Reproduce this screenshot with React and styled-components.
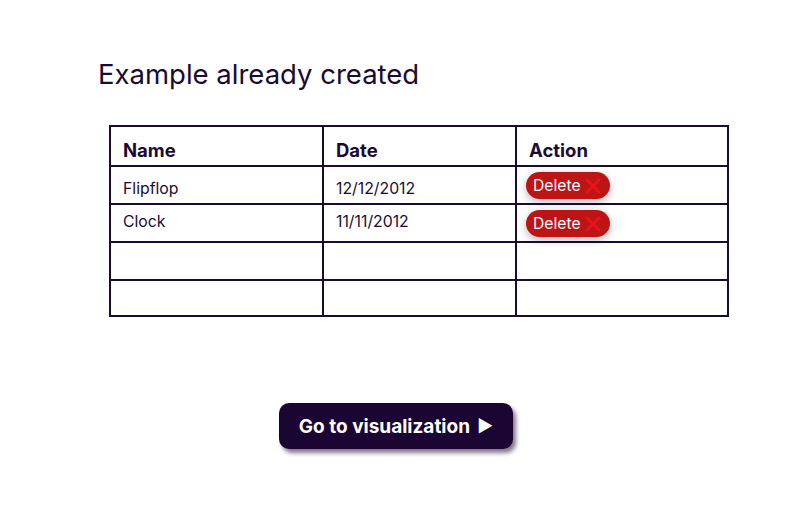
import React from "react";
import styled, { createGlobalStyle } from "styled-components";

const GlobalStyle = createGlobalStyle`
  body {
    margin: 0;
    background: #ffffff;
    font-family: Inter, "Noto Sans", sans-serif;
    color: #1a0b33;
  }
`;

const rows = [
  { name: "Flipflop", date: "12/12/2012" },
  { name: "Clock", date: "11/11/2012" },
  { name: "", date: "" },
  { name: "", date: "" },
];

const XIcon = () => (
  <svg width="18" height="18" viewBox="0 0 18 18">
    <path d="M3 3 L15 15 M15 3 L3 15" stroke="#e8141c" strokeWidth="2.8" strokeLinecap="round" />
  </svg>
);

const App = () => {
  return (
    <>
      <GlobalStyle />
      <Page>
        <Title>Example already created</Title>
        <Table>
          <colgroup>
            <Col $w={213} />
            <Col $w={193} />
            <Col $w={212} />
          </colgroup>
          <thead>
            <tr>
              <Th>Name</Th>
              <Th>Date</Th>
              <Th>Action</Th>
            </tr>
          </thead>
          <tbody>
            {rows.map((row, i) => (
              <Tr key={i} $h={i === 3 ? 36 : 38}>
                <Td $first={i === 0}>{row.name}</Td>
                <Td $first={i === 0}>{row.date}</Td>
                <ActionTd>
                  {row.name && (
                    <DeleteBtn>
                      Delete
                      <XIcon />
                    </DeleteBtn>
                  )}
                </ActionTd>
              </Tr>
            ))}
          </tbody>
        </Table>
        <Footer>
          <GoBtn>
            Go to visualization
            <Play>▶</Play>
          </GoBtn>
        </Footer>
      </Page>
    </>
  );
};

export default App;

const Page = styled.div`
  width: 808px;
  height: 531px;
  padding: 56px 0 0 98px;
  box-sizing: border-box;
`;

const Title = styled.h1`
  margin: 0;
  font-size: 27.5px;
  font-weight: 400;
  line-height: 36px;
`;

const Table = styled.table`
  margin: 33px 0 0 11px;
  width: 618px;
  table-layout: fixed;
  border-collapse: collapse;
  border: 2px solid #1a0b33;

  th,
  td {
    border: 2px solid #1a0b33;
  }
`;

const Col = styled.col`
  width: ${(p) => p.$w}px;
`;

const Th = styled.th`
  height: 40px;
  padding: 8px 0 0 12px;
  text-align: left;
  font-size: 18.5px;
  font-weight: 700;
  box-sizing: border-box;
`;

const Tr = styled.tr`
  height: ${(p) => p.$h}px;
`;

const Td = styled.td`
  padding: ${(p) => (p.$first ? "7px 0 0 12px" : "0 0 3px 12px")};
  font-size: 15.8px;
  box-sizing: border-box;
  vertical-align: middle;
`;

const ActionTd = styled.td`
  padding: 5px 0 0 9px;
  vertical-align: top;
  box-sizing: border-box;
`;

const DeleteBtn = styled.button`
  display: inline-flex;
  align-items: center;
  gap: 3px;
  height: 27px;
  padding: 0 8px 0 7px;
  border: none;
  border-radius: 14px;
  background: #bd1416;
  color: #ffffff;
  font-family: Inter, "Noto Sans", sans-serif;
  font-size: 15.7px;
  box-shadow: 0 3px 8px rgba(0, 0, 0, 0.28);
  cursor: pointer;
`;

const Footer = styled.div`
  margin: 86px 0 0 181px;
`;

const GoBtn = styled.button`
  display: inline-flex;
  align-items: center;
  justify-content: center;
  gap: 7px;
  width: 234px;
  height: 46px;
  border: none;
  border-radius: 10px;
  background: #1a0533;
  color: #ffffff;
  font-family: Inter, "Noto Sans", sans-serif;
  font-size: 19px;
  font-weight: 700;
  box-shadow: 3px 4px 4px rgba(30, 10, 50, 0.55);
  cursor: pointer;
`;

const Play = styled.span`
  font-size: 17px;
  line-height: 1;
`;
